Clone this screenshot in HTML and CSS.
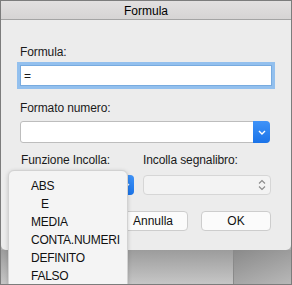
FILE: index.html
```html
<!DOCTYPE html>
<html lang="it">
<head>
<meta charset="utf-8">
<title>Formula</title>
<link rel="stylesheet" href="styles.css">
</head>
<body>
<div class="screen">
  <div class="dialog">
    <div class="titlebar">Formula</div>
    <div class="content">
      <div class="label first">Formula:</div>
      <div class="input">=</div>
      <div class="label">Formato numero:</div>
      <div class="select wide">
        <span class="select-btn">
          <svg width="8" height="5" viewBox="0 0 8 5"><path d="M1 1 L4 4 L7 1" fill="none" stroke="#fff" stroke-width="1.4"/></svg>
        </span>
      </div>
      <div class="pair">
        <div class="col left">
          <div class="label">Funzione Incolla:</div>
          <div class="select">
            <span class="select-btn">
              <svg width="8" height="5" viewBox="0 0 8 5"><path d="M1 1 L4 4 L7 1" fill="none" stroke="#fff" stroke-width="1.4"/></svg>
            </span>
          </div>
        </div>
        <div class="col right">
          <div class="label">Incolla segnalibro:</div>
          <div class="select disabled">
            <svg class="updown" width="8" height="12" viewBox="0 0 8 12"><path d="M1 4.5 L4 1.5 L7 4.5 M1 7.5 L4 10.5 L7 7.5" fill="none" stroke="#8a8a8a" stroke-width="1.1"/></svg>
          </div>
        </div>
      </div>
      <div class="buttons">
        <div class="btn">Annulla</div>
        <div class="btn">OK</div>
      </div>
    </div>
  </div>
  <div class="backdrop">
    <div class="bd-left"></div>
    <div class="bd-right"></div>
  </div>
  <ul class="menu">
    <li>ABS</li>
    <li class="indent">E</li>
    <li>MEDIA</li>
    <li>CONTA.NUMERI</li>
    <li>DEFINITO</li>
    <li>FALSO</li>
  </ul>
</div>
</body>
</html>
```
FILE: styles.css
```css
html, body {
  margin: 0;
  padding: 0;
}
body {
  font-family: "Liberation Sans", Arial, sans-serif;
  font-size: 12px;
  color: #1a1a1a;
}
.screen {
  position: relative;
  width: 292px;
  height: 285px;
  box-sizing: border-box;
  border: 1px solid #7c7c7c;
  overflow: hidden;
  display: flex;
  flex-direction: column;
  background: #b0b0b0;
}
.dialog {
  height: 249px;
  background: #ececec;
  border-radius: 0 0 5px 5px;
  flex: none;
}
.titlebar {
  height: 18px;
  line-height: 20px;
  text-align: center;
  color: #000;
  background: linear-gradient(#e2e0e0, #d6d4d4);
  border-bottom: 1px solid #a4a4a4;
}
.content {
  padding: 0 18px 0 18px;
}
.label {
  height: 14px;
  line-height: 14px;
  padding-left: 1px;
  margin-top: 15px;
  letter-spacing: -0.1px;
}
.label.first {
  margin-top: 25px;
}
.input {
  margin: 6px 1px 0 1px;
  height: 19px;
  line-height: 20px;
  background: #fff;
  border: 1px solid #78abdf;
  box-shadow: 0 0 0 3px #93c0ee;
  padding-left: 3px;
  font-size: 12px;
}
.select {
  position: relative;
  margin-top: 6px;
  height: 19px;
  background: #fff;
  border: 1px solid #bdbdbd;
  border-radius: 3px 4px 4px 3px;
}
.select.wide {
  margin-left: 1px;
  margin-right: 3px;
  height: 20px;
}
.select-btn {
  position: absolute;
  top: -1px;
  right: -1px;
  bottom: -1px;
  width: 17px;
  background: linear-gradient(#3f93f8, #1a73e8);
  border-radius: 0 4px 4px 0;
  display: flex;
  align-items: center;
  justify-content: center;
}
.pair {
  display: flex;
  gap: 9px;
  margin-top: -5px;
}
.col.left {
  width: 114px;
  margin-left: 1px;
}
.col.right {
  width: 128px;
}
.col.right .label {
  padding-left: 0;
}
.pair .label {
  margin-top: 15px;
}
.pair .select {
  margin-top: 8px;
  height: 18px;
}
.select.disabled {
  background: #f3f3f3;
  border-color: #d6d6d6;
  border-radius: 4px;
}
.updown {
  position: absolute;
  right: 4px;
  top: 3px;
}
.buttons {
  display: flex;
  justify-content: flex-end;
  gap: 13px;
  margin-top: 16px;
  margin-right: 2px;
}
.btn {
  width: 68px;
  height: 18px;
  line-height: 19px;
  text-align: center;
  background: #fbfbfb;
  border: 1px solid #cdcdcd;
  border-radius: 4px;
  color: #111;
}
.backdrop {
  flex: 1;
  display: flex;
}
.bd-left {
  width: 232px;
  background: linear-gradient(#9c9c9c, #c6c6c6);
  border-right: 1px solid #8a8a8a;
}
.bd-right {
  flex: 1;
  background: linear-gradient(160deg, #8a8a8a, #b8b8b8);
}
.menu {
  position: absolute;
  left: 7px;
  top: 169px;
  width: 120px;
  height: 130px;
  margin: 0;
  padding: 6px 0 0 0;
  list-style: none;
  background: #f4f4f4;
  border: 1px solid #d2d2d2;
  border-radius: 6px 6px 0 0;
  box-shadow: 0 1px 4px rgba(0, 0, 0, 0.18);
  box-sizing: border-box;
}
.menu li {
  height: 18px;
  line-height: 18px;
  padding-left: 22px;
  color: #111;
  letter-spacing: -0.25px;
}
.menu li.indent {
  padding-left: 32px;
}
```
